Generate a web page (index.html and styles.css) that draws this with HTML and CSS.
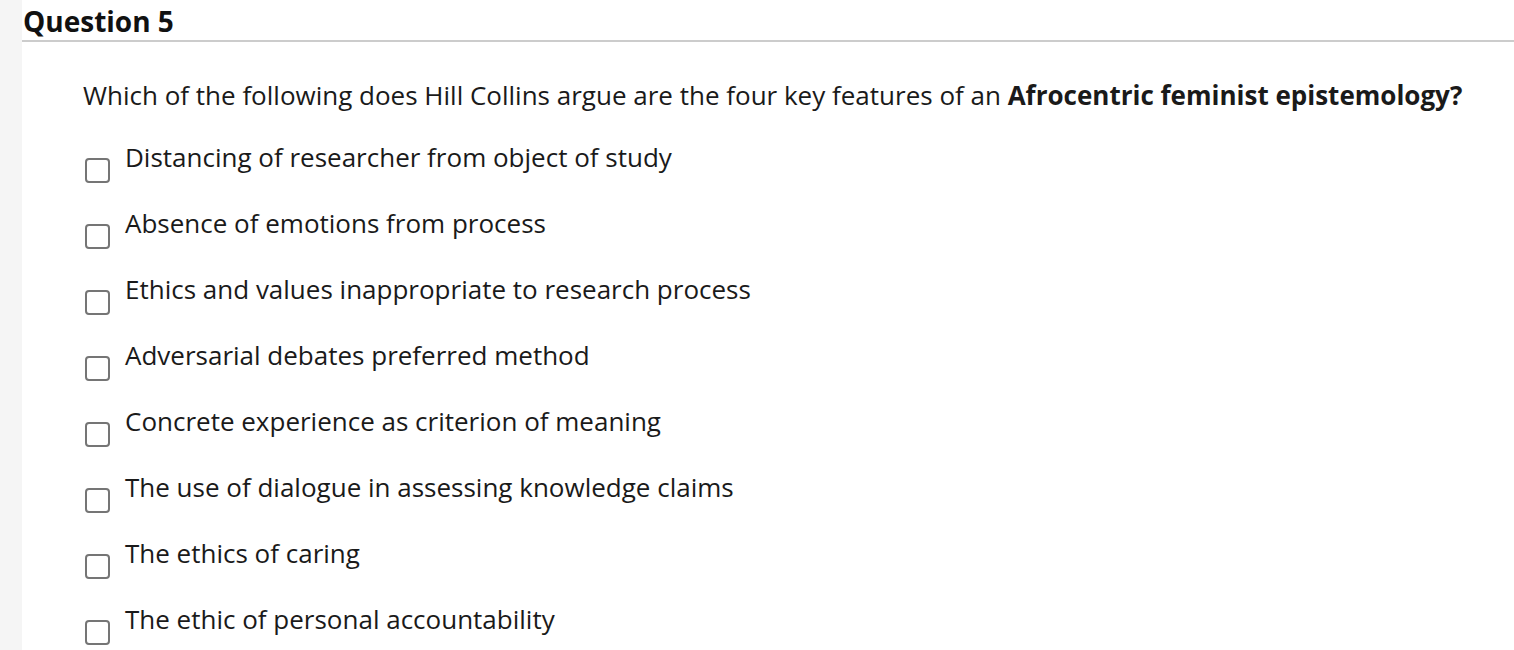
FILE: index.html
```html
<!DOCTYPE html>
<html>
<head>
<meta charset="utf-8">
<link rel="stylesheet" href="styles.css">
</head>
<body>
<div class="page">
  <div class="gutter"></div>
  <div class="main">
    <div class="header"><h2 class="title">Question 5</h2></div>
    <div class="body">
      <p class="prompt">Which of the following does Hill Collins argue are the four key features of an <strong>Afrocentric feminist epistemology?</strong></p>
      <ul class="options">
        <li class="option"><span class="box"></span><span class="label">Distancing of researcher from object of study</span></li>
        <li class="option"><span class="box"></span><span class="label">Absence of emotions from process</span></li>
        <li class="option"><span class="box"></span><span class="label">Ethics and values inappropriate to research process</span></li>
        <li class="option"><span class="box"></span><span class="label">Adversarial debates preferred method</span></li>
        <li class="option"><span class="box"></span><span class="label">Concrete experience as criterion of meaning</span></li>
        <li class="option"><span class="box"></span><span class="label">The use of dialogue in assessing knowledge claims</span></li>
        <li class="option"><span class="box"></span><span class="label">The ethics of caring</span></li>
        <li class="option"><span class="box"></span><span class="label">The ethic of personal accountability</span></li>
      </ul>
    </div>
  </div>
</div>
</body>
</html>
```

FILE: styles.css
```css
html, body {
  margin: 0;
  padding: 0;
  background: #ffffff;
}
body {
  font-family: "Open Sans", "Liberation Sans", sans-serif;
  color: #1a1a1a;
  overflow: hidden;
}
.page {
  display: flex;
  min-height: 650px;
}
.gutter {
  width: 22px;
  flex: none;
  background: #f5f5f5;
}
.main {
  flex: 1;
}
.header {
  padding: 3px 0 0 1px;
  border-bottom: 2px solid #cccccc;
}
.title {
  margin: 0;
  font-size: 28px;
  line-height: 37px;
  font-weight: 700;
  color: #111;
}
.body {
  padding-left: 61px;
}
.prompt {
  margin: 35px 0 0 0;
  font-size: 26px;
  line-height: 36px;
}
.prompt strong {
  font-weight: 700;
}
.options {
  list-style: none;
  margin: 26px 0 0 0;
  padding: 0;
  display: flex;
  flex-direction: column;
  gap: 22px;
}
.option {
  display: flex;
  align-items: flex-start;
  gap: 15px;
  font-size: 26px;
  line-height: 36px;
}
.box {
  flex: none;
  width: 21px;
  height: 21px;
  margin: 19px 0 0 2px;
  border: 2px solid #757575;
  border-radius: 4px;
  background: #fff;
}
```
